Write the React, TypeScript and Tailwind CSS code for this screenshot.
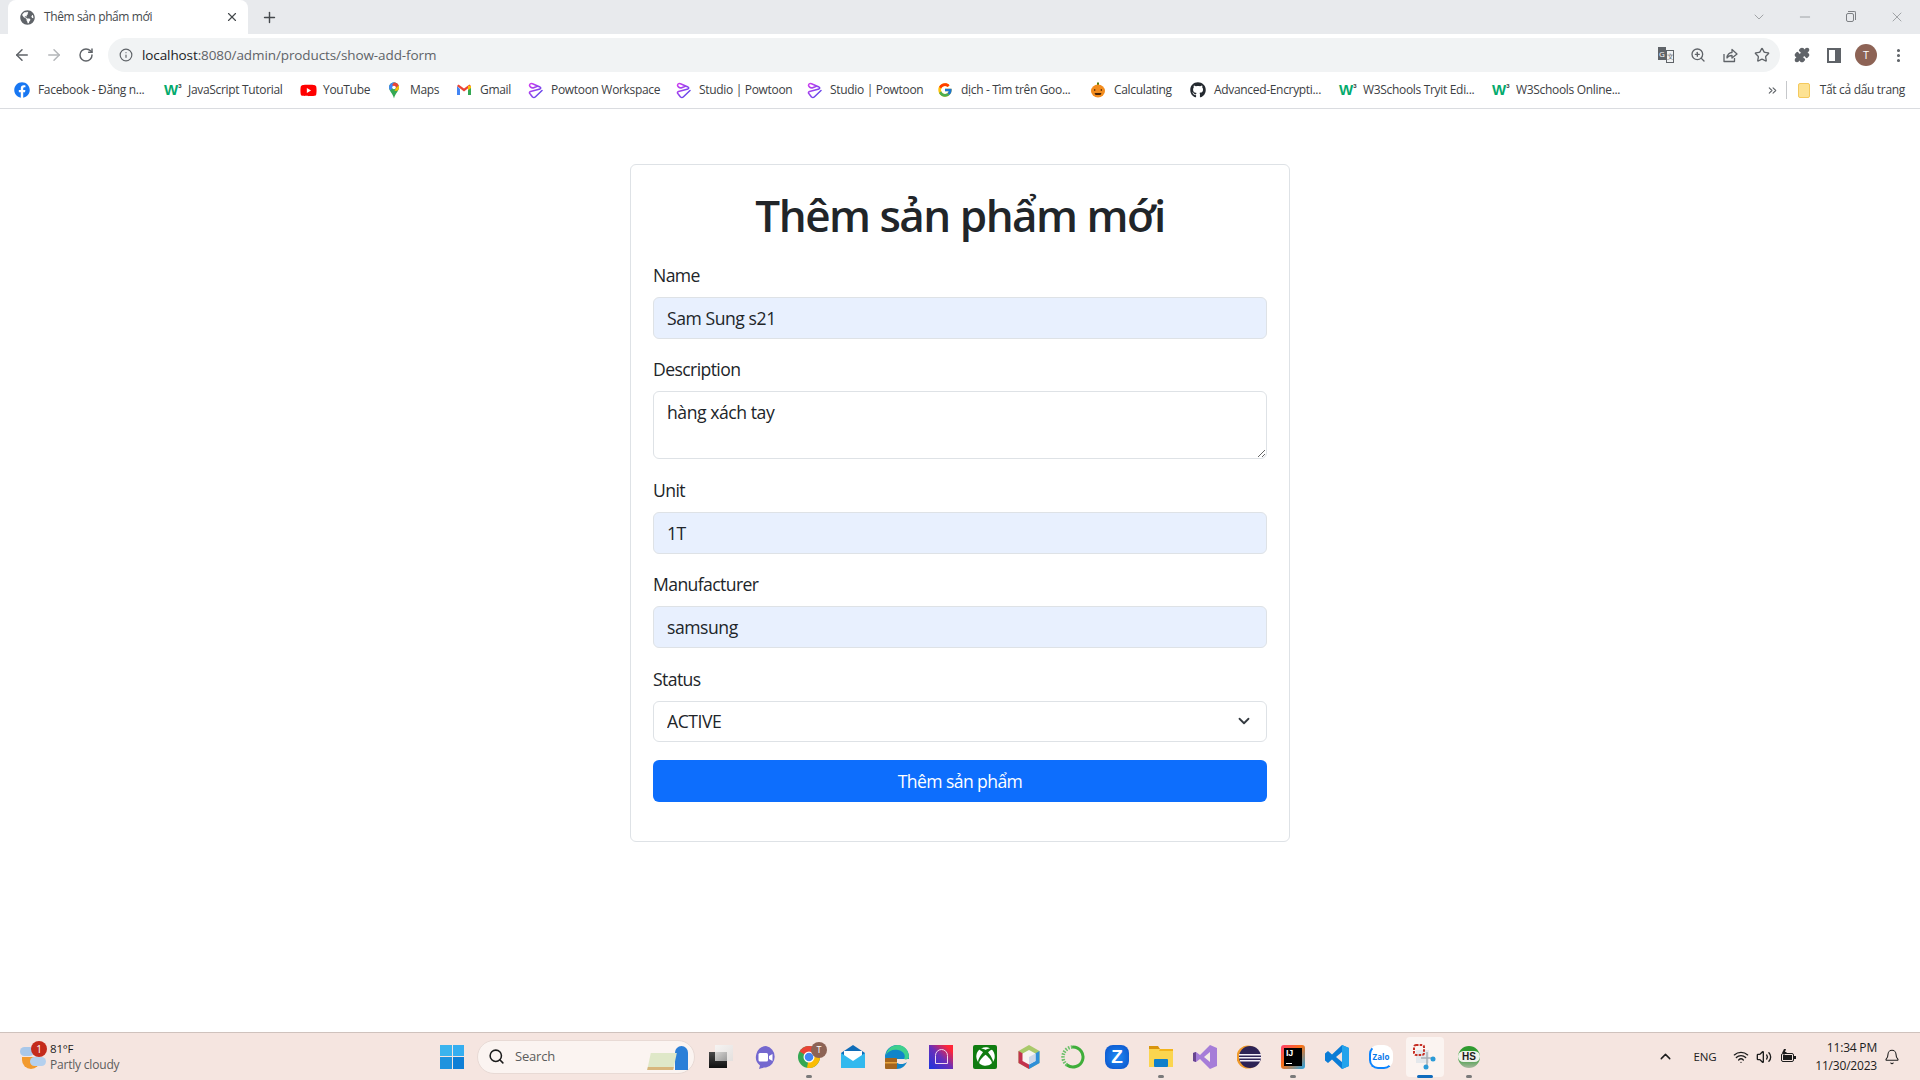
import type { ReactNode } from "react";
import {
  ArrowLeft,
  ArrowRight,
  Bell,
  ChevronDown,
  ChevronUp,
  ChevronsRight,
  EllipsisVertical,
  Info,
  Minus,
  Plus,
  Puzzle,
  RotateCw,
  Search,
  Star,
  Volume2,
  Wifi,
  X,
  ZoomIn,
} from "lucide-react";
import { FaFacebook, FaGithub, FaGlobeAmericas, FaXbox, FaYoutube } from "react-icons/fa";
import { FcGoogle } from "react-icons/fc";

const W3 = () => (
  <span className="shrink-0 w-4 flex items-start text-[15px] leading-4 font-black text-[#04aa6d] font-['Liberation_Sans',sans-serif] tracking-normal">
    W<span className="text-[6px] leading-[8px] text-[#333]">3</span>
  </span>
);

const Powtoon = () => (
  <svg width="16" height="17" viewBox="0 0 16 17" fill="none" className="shrink-0">
    <defs>
      <linearGradient id="pt" x1="0" y1="0" x2="1" y2="1">
        <stop offset="0" stopColor="#d03cf0" />
        <stop offset="1" stopColor="#4a4ae8" />
      </linearGradient>
    </defs>
    <path
      d="M2.500 3.500Q2.500 1 5.500 1.800L13 5Q14.500 6 13 7L3.500 9.500Q1.500 10.500 3.200 12L5.500 15Q7 16.200 8.500 14.800L15 8.500M2.500 3.500Q3 5.500 6 6L11 4"
      stroke="url(#pt)"
      strokeWidth="1.500"
      strokeLinecap="round"
      strokeLinejoin="round"
    />
  </svg>
);

const MapsPin = () => (
  <svg width="16" height="17" viewBox="0 0 16 17" className="shrink-0">
    <path d="M8 0.500C5 0.500 3 2.800 3 5.500c0 3.500 4 6 5 11 1-5 5-7.500 5-11 0-2.700-2-5-5-5z" fill="#34a853" />
    <path d="M3 5.500C3 2.800 5 .5 8 .5c1 0 2 .3 2.800 1L4.400 8.500C3.600 7.500 3 6.600 3 5.500z" fill="#4285f4" />
    <path d="M8 .5c2.400 0 4 1.300 4.700 3L10 6 6 3 8 .5z" fill="#ea4335" />
    <path d="M12.700 3.500c.2.600.3 1.300.3 2 0 1-.5 2-1.200 3L8.500 9 10 6z" fill="#fbbc04" />
    <circle cx="8" cy="5.500" r="1.800" fill="#fff" />
  </svg>
);

const Gmail = () => (
  <svg width="16" height="16" viewBox="0 0 16 16" className="shrink-0">
    <path d="M1 4v9h3V7z" fill="#4285f4" />
    <path d="M12 7v6h3V4z" fill="#34a853" />
    <path d="M1 4l7 5.500L15 4l-1.500-1.500L8 6.500 2.500 2.500z" fill="#ea4335" />
    <path d="M12 3.500L15 4v2l-3 2.200z" fill="#fbbc04" />
  </svg>
);

const Pumpkin = () => (
  <svg width="16" height="16" viewBox="0 0 16 16" className="shrink-0">
    <rect x="7" y="0.500" width="2" height="3" fill="#4d7c0f" />
    <ellipse cx="8" cy="9" rx="7" ry="6.500" fill="#f28c1e" />
    <path d="M4 7l2 1-2 1zM12 7l-2 1 2 1zM4.500 11h7l-1 2h-5z" fill="#4a2508" />
  </svg>
);

const bookmarks: { label: string; icon: ReactNode; w: string }[] = [
  { label: "Facebook - Đăng n...", icon: <FaFacebook size={16} className="shrink-0 text-[#1877f2]" />, w: "w-[150px]" },
  { label: "JavaScript Tutorial", icon: <W3 />, w: "w-[136px]" },
  { label: "YouTube", icon: <FaYoutube size={17} className="shrink-0 -mr-[2px] text-[#f00]" />, w: "w-[86px]" },
  { label: "Maps", icon: <MapsPin />, w: "w-[70px]" },
  { label: "Gmail", icon: <Gmail />, w: "w-[71px]" },
  { label: "Powtoon Workspace", icon: <Powtoon />, w: "w-[148px]" },
  { label: "Studio | Powtoon", icon: <Powtoon />, w: "w-[131px]" },
  { label: "Studio | Powtoon", icon: <Powtoon />, w: "w-[131px]" },
  { label: "dịch - Tìm trên Goo...", icon: <FcGoogle size={16} className="shrink-0" />, w: "w-[153px]" },
  { label: "Calculating", icon: <Pumpkin />, w: "w-[100px]" },
  { label: "Advanced-Encrypti...", icon: <FaGithub size={16} className="shrink-0 text-[#24292f]" />, w: "w-[149px]" },
  { label: "W3Schools Tryit Edi...", icon: <W3 />, w: "w-[153px]" },
  { label: "W3Schools Online...", icon: <W3 />, w: "w-[130px]" },
];

const TabBar = () => (
  <div className="h-[34px] bg-[#e8eaed] flex items-center text-[#45494d]">
    <div className="ml-2 w-[240px] h-full bg-white rounded-t-lg flex items-center pl-[12px] pr-[9px]">
      <FaGlobeAmericas size={15} className="text-[#5f6368]" />
      <span className="ml-[9px] flex-1 text-[12px] tracking-[-0.4px]">Thêm sản phẩm mới</span>
      <X size={14} />
    </div>
    <Plus size={17} className="ml-[13px] text-[#45494d]" strokeWidth={2} />
    <div className="ml-auto flex items-center gap-[30px] pr-[15px] text-[#7d8084]">
      <ChevronDown size={16} strokeWidth={1} />
      <Minus size={16} strokeWidth={1} />
      <div className="relative w-4 h-4">
        <div className="absolute left-[3px] top-[4px] w-[8px] h-[9px] border border-[#7d8084] rounded-[2px]" />
        <div className="absolute left-[5px] top-[2px] w-[8px] h-[9px] border-t border-r border-[#7d8084] rounded-tr-[2px]" />
      </div>
      <X size={16} strokeWidth={1} />
    </div>
  </div>
);

const ShareIcon = () => (
  <svg width="16" height="16" viewBox="0 0 16 16" fill="none" stroke="currentColor" strokeWidth="1.300" strokeLinejoin="round">
    <path d="M2 7v7.500h10.500V11" />
    <path d="M5 11C5 7.500 7.500 5.500 10 5.500V2.500L15 7l-5 4V8.500C8 8.500 6 9.200 5 11z" />
  </svg>
);

const Toolbar = () => (
  <div className="h-10 pt-[2px] bg-white flex items-center text-[#5f6368]">
    <ArrowLeft size={18} strokeWidth={2} className="ml-[13px]" />
    <ArrowRight size={18} strokeWidth={2} className="ml-[14px] text-[#b4b6b9]" />
    <RotateCw size={16} strokeWidth={2.2} className="ml-[15px]" />
    <div className="ml-[14px] w-[1672px] h-[34px] bg-[#f1f3f4] rounded-full flex items-center pl-[11px] pr-[10px]">
      <Info size={14} strokeWidth={2} />
      <span className="ml-[9px] text-[13.5px] text-[#5f6368] tracking-[-0.1px]">
        <span className="text-[#202124]">localhost</span>:8080/admin/products/show-add-form
      </span>
      <div className="ml-auto flex items-center gap-[16px]">
        <div className="w-4 h-4 flex -ml-[1px]">
          <span className="w-2 h-[13px] bg-[#5f6368] text-[8px] leading-[13px] text-white text-center">G</span>
          <span className="w-2 h-[13px] mt-[3px] border border-[#5f6368] text-[7px] leading-[11px] text-center">文</span>
        </div>
        <ZoomIn size={16} />
        <ShareIcon />
        <Star size={16} strokeWidth={2} />
      </div>
    </div>
    <Puzzle size={16} fill="currentColor" className="ml-[14px]" />
    <div className="ml-[17px] w-[14px] h-[15px] border-2 border-[#5f6368] border-r-[6px]" />
    <div className="ml-[14px] w-[22px] h-[22px] rounded-full bg-[#8d6355] text-white text-[11px] leading-[22px] text-center">T</div>
    <EllipsisVertical size={17} strokeWidth={2.4} className="ml-[13px]" />
  </div>
);

const BookmarksBar = () => (
  <div className="h-[35px] pb-[2px] bg-white border-b border-[#dadce0] flex items-center pl-[14px] pr-[15px] text-[12px] text-[#3c4043] tracking-[-0.32px]">
    {bookmarks.map((b, i) => (
      <div key={i} className={`${b.w} flex items-center gap-[8px] whitespace-nowrap`}>
        {b.icon}
        <span>{b.label}</span>
      </div>
    ))}
    <ChevronsRight size={13} className="ml-auto text-[#5f6368]" />
    <div className="ml-[7px] w-px h-[18px] bg-[#c6c8cb]" />
    <div className="ml-[11px] w-[12px] h-[15px] bg-[#fde293] border border-[#f4c95d] rounded-[2px]" />
    <span className="ml-[10px]">Tất cả dấu trang</span>
  </div>
);

const Field = ({ label, children }: { label: string; children: ReactNode }) => (
  <div className="flex flex-col mb-[17.2px]">
    <label className="block mb-[8.8px] leading-[26.4px]">{label}</label>
    {children}
  </div>
);

const inputClass =
  "w-full h-[42px] px-[13px] rounded-[6px] border border-[#dee2e6] bg-[#e8f0fe] text-[#212529] outline-none tracking-[-0.45px]";

const ProductForm = () => (
  <div className="mt-[55px] mx-auto w-[660px] h-[678px] border border-[#dee2e6] rounded-[6px] px-[22px] pt-[24px] text-[17.6px] text-[#212529] tracking-[-0.6px]">
    <h1 className="text-[44px] leading-[53px] font-semibold text-center mb-[20px] tracking-[-1.5px]">Thêm sản phẩm mới</h1>
    <form>
      <Field label="Name">
        <input className={inputClass} defaultValue="Sam Sung s21" />
      </Field>
      <Field label="Description">
        <textarea
          className="block w-full h-[68px] -mt-px mb-px px-[13px] py-[7px] rounded-[6px] border border-[#dee2e6] bg-white outline-none tracking-[-0.45px]"
          defaultValue="hàng xách tay"
        />
      </Field>
      <Field label="Unit">
        <input className={inputClass} defaultValue="1T" />
      </Field>
      <Field label="Manufacturer">
        <input className={inputClass} defaultValue="samsung" />
      </Field>
      <Field label="Status">
        <div className="relative">
          <select className="block w-full h-[41px] mb-px px-[13px] rounded-[6px] border border-[#dee2e6] bg-white appearance-none outline-none tracking-[-0.45px]">
            <option>ACTIVE</option>
          </select>
          <ChevronDown size={18} strokeWidth={2.4} className="absolute right-[14px] top-[11px] text-[#343a40]" />
        </div>
      </Field>
      <button type="button" className="block w-full h-[42px] rounded-[6px] bg-[#0d6efd] text-white">
        Thêm sản phẩm
      </button>
    </form>
  </div>
);

const WinLogo = () => (
  <div className="grid grid-cols-2 gap-[1px] w-[24px] h-[24px]">
    <div className="bg-[#3bb4ee]" />
    <div className="bg-[#35aef0]" />
    <div className="bg-[#1f93de]" />
    <div className="bg-[#0f7fd6]" />
  </div>
);

const appIcons: { icon: ReactNode; dot?: boolean; active?: boolean }[] = [
  {
    icon: (
      <div className="relative w-6 h-[23px]">
        <div className="absolute right-0 top-0 w-[18px] h-[16px] bg-gradient-to-br from-[#f6f4f3] to-[#e4e0de]" />
        <div className="absolute left-0 bottom-0 w-[18px] h-[16px] bg-gradient-to-b from-[#4a4a4a] to-[#111]" />
        <div className="absolute left-[6px] top-[7px] w-[12px] h-[9px] bg-gradient-to-br from-[#d8d6d4] to-[#9a9a9a]" />
      </div>
    ),
  },
  {
    icon: (
      <svg width="24" height="24" viewBox="0 0 24 24">
        <path d="M13 1a11 11 0 0 1 0 21.500c-2 0-5 .5-7 1.500l1-3.500A11 11 0 0 1 13 1z" fill="#7468cf" />
        <rect x="5.500" y="8" width="9.500" height="8.500" rx="1.500" fill="#fff" />
        <path d="M16 11l3.500-2v7L16 14z" fill="#fff" />
      </svg>
    ),
  },
  {
    dot: true,
    icon: (
      <div className="relative">
        <svg width="24" height="24" viewBox="0 0 24 24">
          <circle cx="12" cy="12" r="11" fill="#34a853" />
          <path d="M12 12L21.500 6.500A11 11 0 0 0 2.500 6.500Z" fill="#ea4335" />
          <path d="M12 12L21.500 6.500A11 11 0 0 1 10 22.800Z" fill="#fbbc04" />
          <circle cx="12" cy="12" r="5.500" fill="#fff" />
          <circle cx="12" cy="12" r="4.300" fill="#4285f4" />
        </svg>
        <div className="absolute -right-[6px] -top-[3px] w-4 h-4 rounded-full bg-[#8d6355] text-white text-[9px] leading-4 text-center">T</div>
      </div>
    ),
  },
  {
    icon: (
      <svg width="24" height="24" viewBox="0 0 24 24">
        <path d="M0 8L12 0l12 8v15H0z" fill="#0f6cb8" />
        <path d="M3 6h18v10H3z" fill="#fff" />
        <path d="M0 8l12 8 12-8v15H0z" fill="#32b9ee" />
      </svg>
    ),
  },
  {
    icon: (
      <svg width="24" height="24" viewBox="0 0 24 24">
        <path d="M12 0a12 12 0 0 1 12 12v2H10c0 3 3 5 6 5 2.500 0 4-.5 6-2-2 4-5 7-10 7A12 12 0 0 1 12 0z" fill="#1185c9" />
        <path d="M1 10C2 4 7 0 13 0c6 0 11 5 11 12 0 2-3 3-5 2 2-3 0-8-6-9-5-1-10 1-12 5z" fill="#3fd08d" />
        <rect x="0" y="13" width="12" height="11" rx="1" fill="#a4651f" />
        <rect x="0" y="17" width="12" height="1.500" fill="#e8a33d" />
      </svg>
    ),
  },
  {
    icon: (
      <div className="w-6 h-6 bg-[linear-gradient(45deg,#1a35e0_0%,#6b2fb8_50%,#ff2638_85%)] flex items-center justify-center">
        <div className="w-[13px] h-[15px] border-[1.5px] border-[#f2d9ee] rounded-t-full rounded-b-[3px]" />
      </div>
    ),
  },
  {
    icon: (
      <div className="w-6 h-6 bg-[#107c10] rounded-[2px] flex items-center justify-center">
        <FaXbox size={19} className="text-white" />
      </div>
    ),
  },
  {
    icon: (
      <svg width="24" height="24" viewBox="0 0 24 24">
        <path d="M12 0l10.500 6v12L12 24 1.500 18V6z" fill="#a9c96a" />
        <path d="M1.500 6L12 12v12L1.500 18z" fill="#c2334d" />
        <path d="M22.500 6L12 12v12l10.500-6z" fill="#2f8fd8" />
        <path d="M5.500 8.500L12 5l6.500 3.500v7.500L12 19.500 5.500 16z" fill="#f7f4f2" />
        <path d="M12 12v7.500l6.500-3.500V8.500z" fill="#cfd8e8" />
      </svg>
    ),
  },
  {
    icon: (
      <svg width="24" height="24" viewBox="0 0 24 24" fill="none">
        <path d="M12 2a10 10 0 1 1-6 18" stroke="#3fae3a" strokeWidth="3" strokeLinecap="round" />
        <path d="M6 20A10 10 0 0 1 12 2" stroke="#6cc06a" strokeWidth="3.500" strokeDasharray="1.500 1.300" />
      </svg>
    ),
  },
  {
    icon: (
      <div className="w-6 h-6 rounded-[8px] bg-[radial-gradient(circle,#1f8cf5,#0a4fc8)] text-white text-[19px] leading-6 font-bold text-center font-['Liberation_Sans',sans-serif]">
        Z
      </div>
    ),
  },
  {
    dot: true,
    icon: (
      <svg width="24" height="24" viewBox="0 0 24 24">
        <path d="M0 1h9l2 3h13v3H0z" fill="#d9950f" />
        <path d="M0 4h24v18H0z" fill="#fbd54f" />
        <path d="M11 4h13v2H10z" fill="#f3b41b" />
        <rect x="5" y="14" width="14" height="8" rx="1" fill="#0f7fcb" />
      </svg>
    ),
  },
  {
    icon: (
      <svg width="24" height="24" viewBox="0 0 24 24">
        <path d="M17 0l7 3v18l-7 3L7 14l-4 3-3-1V8l3-1 4 3z" fill="#a67dd8" />
        <path d="M17 7v10l-6-5z" fill="#f4ebe6" />
        <path d="M0 8l3-1v10l-3-1z" fill="#68458f" />
      </svg>
    ),
  },
  {
    icon: (
      <svg width="24" height="24" viewBox="0 0 24 24">
        <circle cx="11" cy="12" r="11.500" fill="#f09a2a" />
        <circle cx="13" cy="12" r="11" fill="#2c2255" />
        <rect x="2" y="9" width="22" height="1.500" fill="#f2eef8" />
        <rect x="2" y="12" width="22" height="1.500" fill="#f2eef8" />
        <rect x="3" y="15" width="20" height="1.500" fill="#f2eef8" />
      </svg>
    ),
  },
  {
    dot: true,
    icon: (
      <div className="w-6 h-6 bg-[linear-gradient(135deg,#ff3d6e,#f97316_45%,#21a4e8)] rounded-[3px] p-[3px]">
        <div className="w-full h-full bg-black text-white text-[9px] leading-[11px] font-bold pl-[2px] font-['Liberation_Sans',sans-serif] relative">
          IJ
          <div className="absolute left-[2px] bottom-[2px] w-[6px] h-px bg-white" />
        </div>
      </div>
    ),
  },
  {
    icon: (
      <svg width="24" height="24" viewBox="0 0 24 24">
        <path d="M17 0l7 3v18l-7 3-10-9.500L3 18l-3-2.500v-7L3 6l4 3.500z" fill="#0a7cd6" />
        <path d="M17 0l7 3v18l-7 3z" fill="#23a3ec" />
        <path d="M17 7v10l-6-5z" fill="#f5e4df" />
      </svg>
    ),
  },
  {
    icon: (
      <div className="w-6 h-6 rounded-[9px] border-2 border-[#0a84ff] border-r-white border-t-white bg-white text-[#0a78e8] text-[8px] leading-[19px] font-bold text-center tracking-normal">
        Zalo
      </div>
    ),
  },
  {
    active: true,
    icon: (
      <svg width="24" height="26" viewBox="0 0 24 26" fill="none">
        <rect x="3" y="6" width="13" height="13" fill="#e4e8ec" />
        <rect x="1" y="1" width="10" height="10" rx="2" stroke="#c62f25" strokeWidth="2" strokeDasharray="2.500 1.200" />
        <path d="M8 14h14M14 8v13" stroke="#a8aeb5" strokeWidth="1.500" />
        <circle cx="20" cy="15" r="2.500" fill="#2b9bd8" />
        <circle cx="13" cy="23" r="2.500" fill="#2b9bd8" />
      </svg>
    ),
  },
  {
    dot: true,
    icon: (
      <div className="w-[22px] h-[22px] rounded-full bg-[linear-gradient(#2f9a2f_50%,#a8b8a0)] flex items-center justify-center">
        <div className="w-full h-[11px] bg-[#eef2ea] rounded-full text-[#1c1c1c] text-[10px] leading-[11px] font-bold text-center font-['Liberation_Sans',sans-serif] tracking-normal">
          HS
        </div>
      </div>
    ),
  },
];

const BatteryIcon = () => (
  <svg width="17" height="16" viewBox="0 0 17 16" fill="none">
    <rect x="1.500" y="4.500" width="12" height="8" rx="1.500" stroke="#1c1c1c" />
    <rect x="3" y="6" width="9" height="5" fill="#1c1c1c" />
    <rect x="14" y="7" width="2" height="3" fill="#1c1c1c" />
    <path d="M4 0L2 4h2L3 7l4-4H5l1-3z" fill="#1c1c1c" />
  </svg>
);

const Taskbar = () => (
  <div className="h-12 bg-[#f5e5e0] border-t border-[#cfc2bd] flex items-center text-[12px] text-[#1c1c1c] shrink-0 tracking-[-0.2px]">
    <div className="w-[430px] h-full flex items-center pl-[20px]">
      <div className="relative w-[28px] h-[28px] mr-[2px]">
        <div className="absolute left-0 top-[4px] w-[14px] h-[9px] rounded-full bg-[#a9c8ea]" />
        <div className="absolute left-[2px] top-[14px] w-[18px] h-[12px] rounded-b-full bg-[#f29a2e]" />
        <div className="absolute left-[10px] top-[14px] w-[16px] h-[9px] rounded-full bg-[#b4d0ee]" />
        <div className="absolute left-[11px] -top-[2px] w-4 h-4 rounded-full bg-[#c42b1c] text-white text-[10px] leading-4 text-center">1</div>
      </div>
      <div className="leading-[16px]">
        <div className="text-[11.5px]">81°F</div>
        <div className="text-[#5c5c5c]">Partly cloudy</div>
      </div>
    </div>
    <div className="w-11 flex justify-center">
      <WinLogo />
    </div>
    <div className="ml-[3px] w-[218px] h-[34px] rounded-full bg-[#fbf4f1] border border-[#e8dad5] flex items-center pl-[10px] relative">
      <Search size={17} strokeWidth={2.2} className="text-[#1c1c1c]" />
      <span className="ml-[10px] text-[13px] text-[#5c5c5c]">Search</span>
      <div className="absolute right-[5px] top-[3px] w-[40px] h-[26px] flex items-end">
        <div className="w-[26px] h-[17px] bg-[#dfe8c8] border-b-[3px] border-[#d8b67c] -skew-x-12" />
        <div className="w-[13px] h-[24px] rounded-t-full rounded-b-sm bg-[#2b7fd8]" />
      </div>
    </div>
    <div className="ml-[4px] flex items-center">
      {appIcons.map((a, i) => (
        <div key={i} className="relative w-11 h-[40px] flex items-center justify-center">
          {a.active && <div className="absolute left-[3px] top-0 w-[38px] h-[40px] rounded-[4px] bg-[#fbf4f1]" />}
          <div className="relative">{a.icon}</div>
          {a.dot && <div className="absolute -bottom-[1px] left-[19px] w-[6px] h-[3px] rounded-full bg-[#7a7a7a]" />}
          {a.active && <div className="absolute -bottom-[1px] left-[14px] w-[16px] h-[3px] rounded-full bg-[#0f6cbd]" />}
        </div>
      ))}
    </div>
    <div className="ml-auto flex items-center">
      <ChevronUp size={17} strokeWidth={2} />
      <span className="ml-[19px] text-[11.5px]">ENG</span>
      <Wifi size={16} className="ml-[17px]" />
      <Volume2 size={16} className="ml-[7px]" />
      <div className="ml-[8px]">
        <BatteryIcon />
      </div>
      <div className="ml-[18px] text-right leading-[18px]">
        <div>11:34 PM</div>
        <div>11/30/2023</div>
      </div>
      <Bell size={16} className="ml-[7px] mr-[20px]" strokeWidth={1.6} />
    </div>
  </div>
);

export default function App() {
  return (
    <div className="w-[1920px] h-[1080px] flex flex-col overflow-hidden bg-white font-['Open_Sans',sans-serif]">
      <TabBar />
      <Toolbar />
      <BookmarksBar />
      <div className="flex-1">
        <ProductForm />
      </div>
      <Taskbar />
    </div>
  );
}
